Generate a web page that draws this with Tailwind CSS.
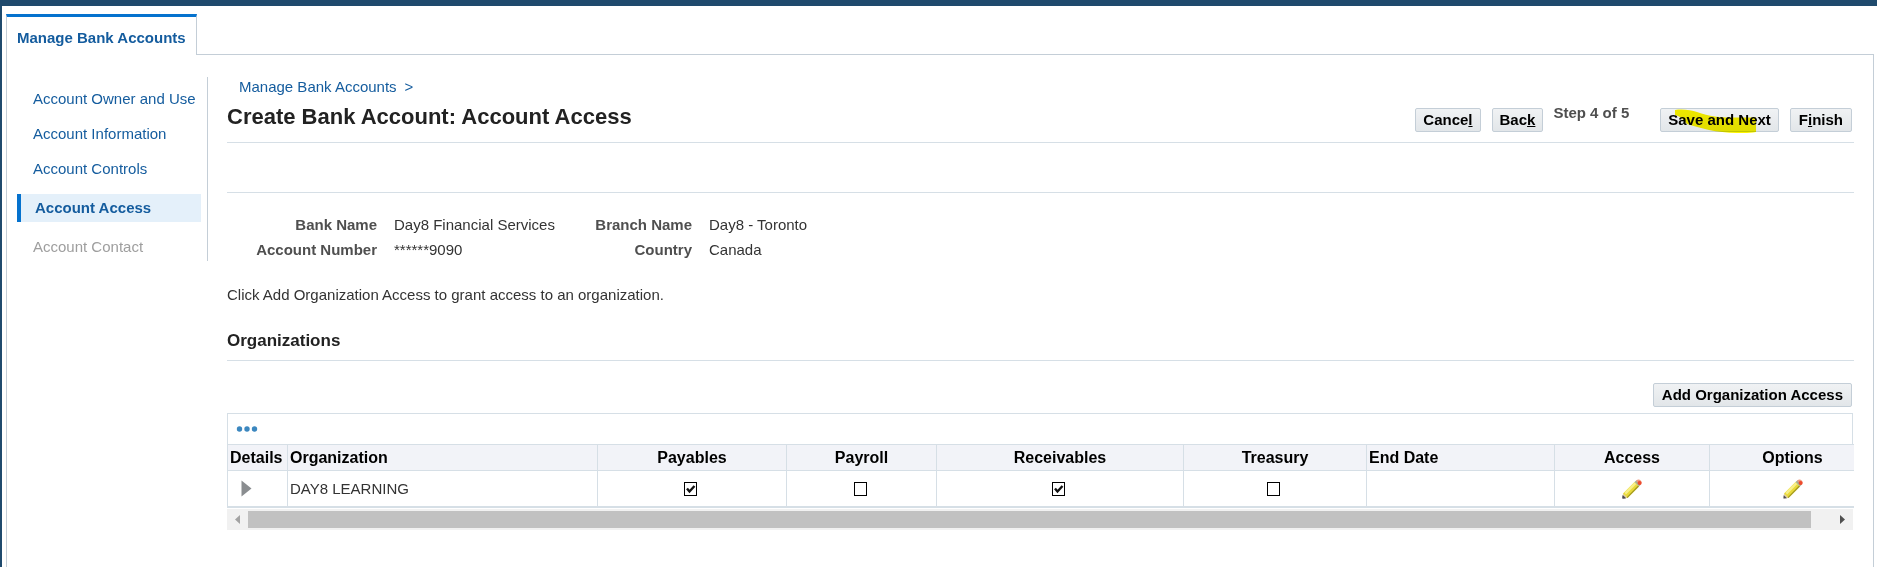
<!DOCTYPE html>
<html lang="en">
<head>
    <meta charset="UTF-8">
    <meta name="viewport" content="width=device-width, initial-scale=1.0">
    <title>Create Bank Account: Account Access</title>
    <script src="https://cdn.jsdelivr.net/npm/@tailwindcss/browser@4"></script>
    <style>
        body {
            font-family: "Liberation Sans", Arial, sans-serif;
        }
    </style>
</head>
<body class="flex flex-col min-h-screen bg-white border-t-6 border-l-2 border-[#1f4a6d] text-[15px] leading-5 text-[#333333]">

    <!-- Tabs -->
    <nav class="flex pt-2 pl-1 pr-[3px]">
        <a href="#" class="block pt-[11px] pb-[7px] px-[10px] border-x border-x-[#c4ced7] border-t-3 border-t-[#0572ce] font-bold text-[#145c9e] w-[191px] whitespace-nowrap">Manage Bank Accounts</a>
        <div class="flex-1 border-b border-[#c4ced7]"></div>
    </nav>

    <div class="flex flex-1 items-start ml-1 mr-[3px] pt-[22px] pl-[10px] pr-[19px] border-x border-[#c4ced7]">

        <!-- Train steps -->
        <aside class="shrink-0 w-[191px] pt-3 pb-1 pr-[6px] border-r border-[#c4ced7] whitespace-nowrap">
            <ul class="flex flex-col gap-[15px] text-[#145c9e]">
                <li class="pl-4"><a href="#">Account Owner and Use</a></li>
                <li class="pl-4"><a href="#">Account Information</a></li>
                <li class="pl-4"><a href="#">Account Controls</a></li>
                <li class="py-1 pl-[14px] border-l-4 border-[#0572ce] bg-[#e4f0fa] font-bold" aria-current="step">Account Access</li>
                <li class="pl-4 text-[#9e9e9e]">Account Contact</li>
            </ul>
        </aside>

        <main class="flex-1 min-w-0 ml-[19px]">
            <header class="flex items-end justify-between border-b border-[#d6dfe6]">
                <div class="pb-[11px]">
                    <div class="pl-3 text-[#145c9e]"><a href="#">Manage Bank Accounts</a><span class="ml-2">&gt;</span></div>
                    <h1 class="mt-[6px] text-[22px] leading-7 font-bold text-[#222222]">Create Bank Account: Account Access</h1>
                </div>
                <div class="flex items-end h-[29px] mb-[10px] mr-[2px] font-bold text-black whitespace-nowrap">
                    <button type="button" class="h-6 px-[7px] border border-[#c4ced7] rounded-xs bg-linear-to-b from-[#f0f2f4] to-[#e2e6e9]">Cance<u>l</u></button>
                    <button type="button" class="h-6 ml-[11px] px-[7px] border border-[#c4ced7] rounded-xs bg-linear-to-b from-[#f0f2f4] to-[#e2e6e9]">Bac<u>k</u></button>
                    <span class="self-start ml-[10px] text-[#4f4f4f]">Step 4 of 5</span>
                    <div class="relative ml-[31px]">
                        <button type="button" class="block h-6 px-[7px] border border-[#c4ced7] rounded-xs bg-linear-to-b from-[#f0f2f4] to-[#e2e6e9]">Save and Next</button>
                        <svg class="absolute left-[15px] top-px w-[81px] h-6 mix-blend-multiply pointer-events-none" viewBox="0 0 81 24" fill="#fdf500">
                            <path d="M0 1 C8 0 16 1 22 3 C36 8 50 9 62 8.5 H81 V23 C68 25 48 24 34 21 C26 19 18 17 12 15 C9 12 7 8 0 6 Z"/>
                        </svg>
                    </div>
                    <button type="button" class="h-6 ml-[11px] px-2 border border-[#c4ced7] rounded-xs bg-linear-to-b from-[#f0f2f4] to-[#e2e6e9]">F<u>i</u>nish</button>
                </div>
            </header>
            <div class="h-[50px] border-b border-[#d6dfe6]"></div>

            <dl class="grid grid-cols-[150px_181px_100px_1fr] gap-x-[17px] gap-y-[5px] mt-[22px]">
                <dt class="text-right font-bold text-[#4f4f4f]">Bank Name</dt>
                <dd>Day8 Financial Services</dd>
                <dt class="text-right font-bold text-[#4f4f4f]">Branch Name</dt>
                <dd>Day8 - Toronto</dd>
                <dt class="text-right font-bold text-[#4f4f4f]">Account Number</dt>
                <dd>******9090</dd>
                <dt class="text-right font-bold text-[#4f4f4f]">Country</dt>
                <dd>Canada</dd>
            </dl>

            <p class="mt-[25px]">Click Add Organization Access to grant access to an organization.</p>

            <h2 class="mt-6 pb-[7px] border-b border-[#d6dfe6] text-[17px] leading-6 font-bold text-[#222222]">Organizations</h2>

            <div class="flex justify-end mt-[22px] mr-[2px]">
                <button type="button" class="h-6 px-2 border border-[#c4ced7] rounded-xs bg-linear-to-b from-[#f0f2f4] to-[#e2e6e9] font-bold text-black">Add Organization Access</button>
            </div>

            <div class="flex items-center h-[31px] mt-[6px] mr-px pl-2 border-t border-x border-[#d6dfe6]">
                <button type="button" aria-label="More actions">
                    <svg class="block w-[22px] h-[6px]" viewBox="0 0 22 6" fill="#3c87bf">
                        <circle cx="3.5" cy="3" r="2.7"/>
                        <circle cx="11" cy="3" r="2.7"/>
                        <circle cx="18.5" cy="3" r="2.7"/>
                    </svg>
                </button>
            </div>

            <div class="overflow-hidden">
                <table class="w-[calc(100%+21px)] table-fixed border-separate border-spacing-0 border-b-2 border-[#d6dfe6]">
                    <colgroup>
                        <col class="w-[60px]">
                        <col>
                        <col class="w-[189px]">
                        <col class="w-[150px]">
                        <col class="w-[247px]">
                        <col class="w-[183px]">
                        <col class="w-[188px]">
                        <col class="w-[155px]">
                        <col class="w-[166px]">
                    </colgroup>
                    <thead>
                        <tr class="h-[26px] bg-[#f2f3f8] text-base leading-6 text-black">
                            <th class="px-[2px] border-t border-l border-[#d6dfe6] text-left">Details</th>
                            <th class="px-[2px] border-t border-l border-[#d6dfe6] text-left">Organization</th>
                            <th class="px-[2px] border-t border-l border-[#d6dfe6]">Payables</th>
                            <th class="px-[2px] border-t border-l border-[#d6dfe6]">Payroll</th>
                            <th class="px-[2px] border-t border-l border-[#d6dfe6]">Receivables</th>
                            <th class="px-[2px] border-t border-l border-[#d6dfe6]">Treasury</th>
                            <th class="px-[2px] border-t border-l border-[#d6dfe6] text-left">End Date</th>
                            <th class="px-[2px] border-t border-l border-[#d6dfe6]">Access</th>
                            <th class="px-[2px] border-t border-l border-[#d6dfe6]">Options</th>
                        </tr>
                    </thead>
                    <tbody>
                        <tr class="h-9">
                            <td class="px-[2px] border-t border-l border-[#d6dfe6]">
                                <button type="button" class="block ml-[11px]" aria-label="Show details">
                                    <svg class="block w-[11px] h-[17px]" viewBox="0 0 11 17"><path d="M0.5 0.5 L10.5 8.5 L0.5 16.5 Z" fill="#8a8d90"/></svg>
                                </button>
                            </td>
                            <td class="px-[2px] border-t border-l border-[#d6dfe6]">DAY8 LEARNING</td>
                            <td class="px-[2px] border-t border-l border-[#d6dfe6]">
                                <label class="grid w-4 mx-auto pr-[3px]">
                                    <input type="checkbox" checked aria-label="Payables" class="peer appearance-none col-start-1 row-start-1 w-[13px] h-[14px] border border-black bg-white">
                                    <svg class="hidden peer-checked:block col-start-1 row-start-1 w-[13px] h-[14px] pointer-events-none" viewBox="0 0 13 14"><path d="M3 6.5 L5.5 9.5 L10.5 4" fill="none" stroke="#111" stroke-width="2.4"/></svg>
                                </label>
                            </td>
                            <td class="px-[2px] border-t border-l border-[#d6dfe6]">
                                <label class="grid w-4 mx-auto pr-[3px]">
                                    <input type="checkbox" aria-label="Payroll" class="peer appearance-none col-start-1 row-start-1 w-[13px] h-[14px] border border-black bg-white">
                                    <svg class="hidden peer-checked:block col-start-1 row-start-1 w-[13px] h-[14px] pointer-events-none" viewBox="0 0 13 14"><path d="M3 6.5 L5.5 9.5 L10.5 4" fill="none" stroke="#111" stroke-width="2.4"/></svg>
                                </label>
                            </td>
                            <td class="px-[2px] border-t border-l border-[#d6dfe6]">
                                <label class="grid w-4 mx-auto pr-[3px]">
                                    <input type="checkbox" checked aria-label="Receivables" class="peer appearance-none col-start-1 row-start-1 w-[13px] h-[14px] border border-black bg-white">
                                    <svg class="hidden peer-checked:block col-start-1 row-start-1 w-[13px] h-[14px] pointer-events-none" viewBox="0 0 13 14"><path d="M3 6.5 L5.5 9.5 L10.5 4" fill="none" stroke="#111" stroke-width="2.4"/></svg>
                                </label>
                            </td>
                            <td class="px-[2px] border-t border-l border-[#d6dfe6]">
                                <label class="grid w-4 mx-auto pr-[3px]">
                                    <input type="checkbox" aria-label="Treasury" class="peer appearance-none col-start-1 row-start-1 w-[13px] h-[14px] border border-black bg-white">
                                    <svg class="hidden peer-checked:block col-start-1 row-start-1 w-[13px] h-[14px] pointer-events-none" viewBox="0 0 13 14"><path d="M3 6.5 L5.5 9.5 L10.5 4" fill="none" stroke="#111" stroke-width="2.4"/></svg>
                                </label>
                            </td>
                            <td class="px-[2px] border-t border-l border-[#d6dfe6]"></td>
                            <td class="px-[2px] border-t border-l border-[#d6dfe6]">
                                <a href="#" class="block w-5 mx-auto" aria-label="Access">
                                    <svg class="block w-5 h-5" viewBox="0 0 20 20">
                                        <path d="M0.5 19.5 L1 14.5 L5.5 19 Z" fill="#dcc9a0"/>
                                        <path d="M0.5 19.5 L0.7 16.2 L3.9 19.2 Z" fill="#4a4a55"/>
                                        <path d="M1 14.5 L12.5 3 L17 7.5 L5.5 19 Z" fill="#e8d93a"/>
                                        <path d="M2.5 13.5 L12.5 3.3 L14.3 5 L4 15.4 Z" fill="#f8f08a"/>
                                        <path d="M4.7 18.2 L16 6.5 L17 7.5 L5.5 19 Z" fill="#a39a22"/>
                                        <path d="M0.5 19.5 L0.7 16.2 L3.9 19.2 Z" fill="#4a4a55"/>
                                        <path d="M12.5 3 L14.5 1.2 L18.8 5.6 L17 7.5 Z" fill="#a5b08f"/>
                                        <path d="M14 1.7 Q16.5 -0.3 18.7 1.4 Q20.6 3.5 18.4 6 Z" fill="#ee9a80"/>
                                        <circle cx="17.6" cy="4" r="2" fill="#ee4a2e"/>
                                    </svg>
                                </a>
                            </td>
                            <td class="px-[2px] border-t border-l border-[#d6dfe6]">
                                <a href="#" class="block w-5 mx-auto" aria-label="Options">
                                    <svg class="block w-5 h-5" viewBox="0 0 20 20">
                                        <path d="M0.5 19.5 L1 14.5 L5.5 19 Z" fill="#dcc9a0"/>
                                        <path d="M1 14.5 L12.5 3 L17 7.5 L5.5 19 Z" fill="#e8d93a"/>
                                        <path d="M2.5 13.5 L12.5 3.3 L14.3 5 L4 15.4 Z" fill="#f8f08a"/>
                                        <path d="M4.7 18.2 L16 6.5 L17 7.5 L5.5 19 Z" fill="#a39a22"/>
                                        <path d="M0.5 19.5 L0.7 16.2 L3.9 19.2 Z" fill="#4a4a55"/>
                                        <path d="M12.5 3 L14.5 1.2 L18.8 5.6 L17 7.5 Z" fill="#a5b08f"/>
                                        <path d="M14 1.7 Q16.5 -0.3 18.7 1.4 Q20.6 3.5 18.4 6 Z" fill="#ee9a80"/>
                                        <circle cx="17.6" cy="4" r="2" fill="#ee4a2e"/>
                                    </svg>
                                </a>
                            </td>
                        </tr>
                    </tbody>
                </table>
            </div>

            <!-- Horizontal scrollbar -->
            <div class="flex items-center h-[21px] mt-px mr-px bg-[#f1f1f1]">
                <div class="w-[21px] pl-2">
                    <svg class="block w-[5px] h-[9px]" viewBox="0 0 5 9" fill="#a3a3a3"><path d="M5 0 V9 L0 4.5 Z"/></svg>
                </div>
                <div class="flex-1 h-[17px] bg-[#c1c1c1]"></div>
                <div class="w-[42px] pr-2">
                    <svg class="block ml-auto w-[5px] h-[9px]" viewBox="0 0 5 9" fill="#505050"><path d="M0 0 V9 L5 4.5 Z"/></svg>
                </div>
            </div>
        </main>
    </div>

</body>
</html>
